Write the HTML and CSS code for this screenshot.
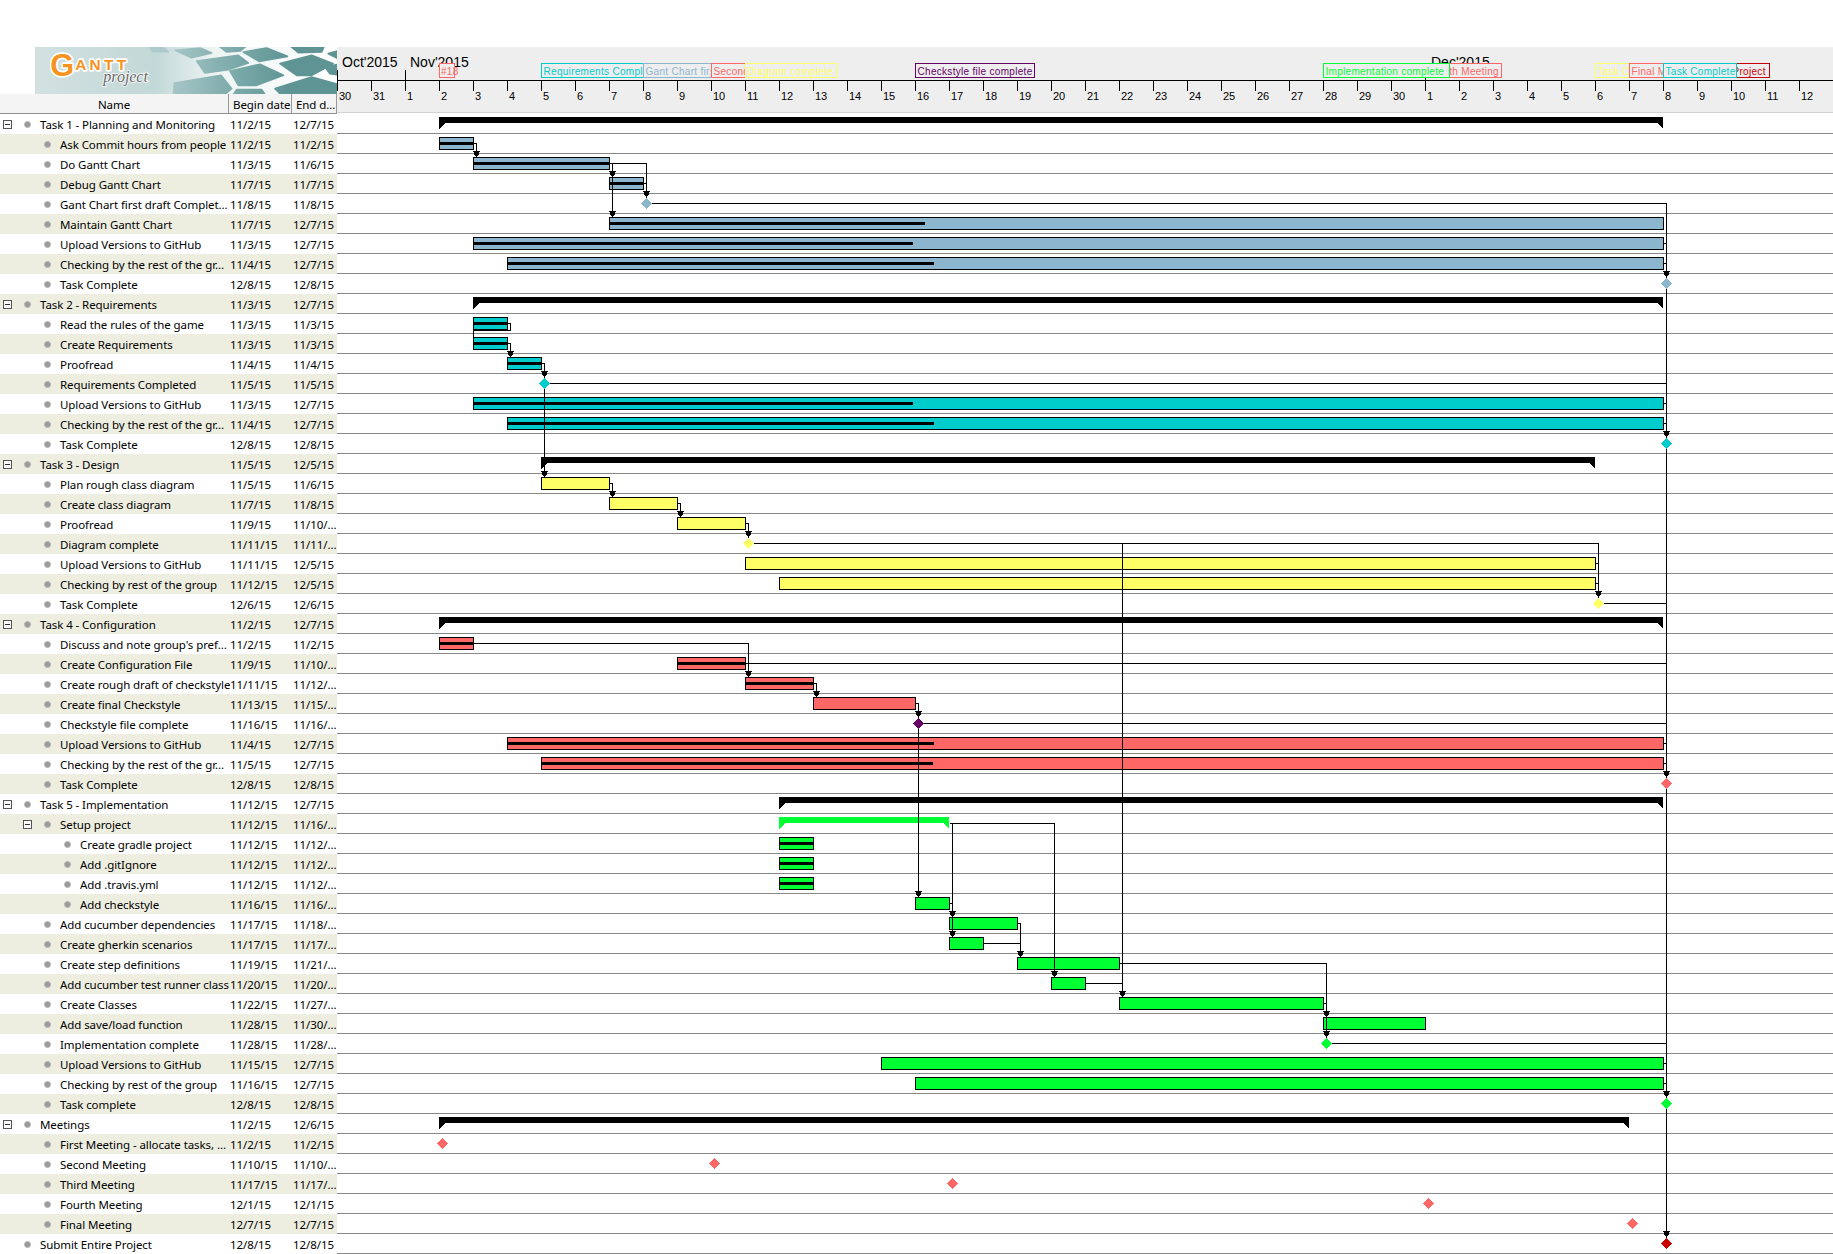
FILE: index.html
```html
<!DOCTYPE html>
<html>
<head>
	<title>GanttProject</title>
	<link rel="stylesheet" href="styles.css">
</head>
<body>
<div class="page">

  <div class="left">
    <svg class="logo" viewBox="0 0 906 141" width="302" height="47">
      <defs>
        <linearGradient id="logobg" x1="0" x2="1" y1="0" y2="0">
          <stop offset="0" stop-color="#d2e0e0"/><stop offset="0.4" stop-color="#c3d8d8"/><stop offset="0.6" stop-color="#eef4f4"/><stop offset="1" stop-color="#fff"/>
        </linearGradient>
        <linearGradient id="hex" gradientUnits="userSpaceOnUse" x1="380" x2="760" y1="0" y2="0">
          <stop offset="0" stop-color="#aecbcb"/><stop offset="0.5" stop-color="#82aeae"/><stop offset="1" stop-color="#5f9494"/>
        </linearGradient>
      </defs>
      <rect class="logo-bg" width="906" height="141"/>
      <g class="hexes">
        <polygon points="340,-8 370,-8 400,14 352,14"/>
        <polygon points="420,10 495,3 530,18 470,32"/>
        <polygon points="545,-8 640,-8 615,12 575,15"/>
        <polygon points="625,15 695,3 757,28 672,43"/>
        <polygon points="760,-8 870,-8 860,15 790,17"/>
        <polygon points="485,42 610,25 640,48 580,68 510,78"/>
        <polygon points="585,72 675,52 745,85 665,115 610,115"/>
        <polygon points="735,50 830,25 895,50 830,85 785,85"/>
        <polygon points="880,20 920,8 920,40"/>
        <polygon points="870,60 920,50 920,85 885,80"/>
        <polygon points="418,108 558,85 590,125 560,150 415,150"/>
        <polygon points="605,128 680,128 695,150 590,150"/>
        <polygon points="720,125 830,90 920,115 920,150 745,150"/>
      </g>
      <text class="logo-gantt" x="46" y="87"><tspan class="logo-g">G</tspan><tspan dx="3" dy="-17">ANTT</tspan></text>
      <text class="logo-project" x="205" y="104">project</text>
    </svg>

    <div class="thead">
      <div class="th th-name">Name</div>
      <div class="th">Begin date</div>
      <div class="th">End d...</div>
    </div>

    <div class="rows">
      <div class="row l0"><span class="name"><i class="tog"></i><i class="dot"></i>Task 1 - Planning and Monitoring</span><span>11/2/15</span><span>12/7/15</span></div>
      <div class="row l1"><span class="name"><i class="dot"></i>Ask Commit hours from people</span><span>11/2/15</span><span>11/2/15</span></div>
      <div class="row l1"><span class="name"><i class="dot"></i>Do Gantt Chart</span><span>11/3/15</span><span>11/6/15</span></div>
      <div class="row l1"><span class="name"><i class="dot"></i>Debug Gantt Chart</span><span>11/7/15</span><span>11/7/15</span></div>
      <div class="row l1"><span class="name"><i class="dot"></i>Gant Chart first draft Complet...</span><span>11/8/15</span><span>11/8/15</span></div>
      <div class="row l1"><span class="name"><i class="dot"></i>Maintain Gantt Chart</span><span>11/7/15</span><span>12/7/15</span></div>
      <div class="row l1"><span class="name"><i class="dot"></i>Upload Versions to GitHub</span><span>11/3/15</span><span>12/7/15</span></div>
      <div class="row l1"><span class="name"><i class="dot"></i>Checking by the rest of the gr...</span><span>11/4/15</span><span>12/7/15</span></div>
      <div class="row l1"><span class="name"><i class="dot"></i>Task Complete</span><span>12/8/15</span><span>12/8/15</span></div>

      <div class="row l0"><span class="name"><i class="tog"></i><i class="dot"></i>Task 2 - Requirements</span><span>11/3/15</span><span>12/7/15</span></div>
      <div class="row l1"><span class="name"><i class="dot"></i>Read the rules of the game</span><span>11/3/15</span><span>11/3/15</span></div>
      <div class="row l1"><span class="name"><i class="dot"></i>Create Requirements</span><span>11/3/15</span><span>11/3/15</span></div>
      <div class="row l1"><span class="name"><i class="dot"></i>Proofread</span><span>11/4/15</span><span>11/4/15</span></div>
      <div class="row l1"><span class="name"><i class="dot"></i>Requirements Completed</span><span>11/5/15</span><span>11/5/15</span></div>
      <div class="row l1"><span class="name"><i class="dot"></i>Upload Versions to GitHub</span><span>11/3/15</span><span>12/7/15</span></div>
      <div class="row l1"><span class="name"><i class="dot"></i>Checking by the rest of the gr...</span><span>11/4/15</span><span>12/7/15</span></div>
      <div class="row l1"><span class="name"><i class="dot"></i>Task Complete</span><span>12/8/15</span><span>12/8/15</span></div>

      <div class="row l0"><span class="name"><i class="tog"></i><i class="dot"></i>Task 3 - Design</span><span>11/5/15</span><span>12/5/15</span></div>
      <div class="row l1"><span class="name"><i class="dot"></i>Plan rough class diagram</span><span>11/5/15</span><span>11/6/15</span></div>
      <div class="row l1"><span class="name"><i class="dot"></i>Create class diagram</span><span>11/7/15</span><span>11/8/15</span></div>
      <div class="row l1"><span class="name"><i class="dot"></i>Proofread</span><span>11/9/15</span><span>11/10/...</span></div>
      <div class="row l1"><span class="name"><i class="dot"></i>Diagram complete</span><span>11/11/15</span><span>11/11/...</span></div>
      <div class="row l1"><span class="name"><i class="dot"></i>Upload Versions to GitHub</span><span>11/11/15</span><span>12/5/15</span></div>
      <div class="row l1"><span class="name"><i class="dot"></i>Checking by rest of the group</span><span>11/12/15</span><span>12/5/15</span></div>
      <div class="row l1"><span class="name"><i class="dot"></i>Task Complete</span><span>12/6/15</span><span>12/6/15</span></div>

      <div class="row l0"><span class="name"><i class="tog"></i><i class="dot"></i>Task 4 - Configuration</span><span>11/2/15</span><span>12/7/15</span></div>
      <div class="row l1"><span class="name"><i class="dot"></i>Discuss and note group's pref...</span><span>11/2/15</span><span>11/2/15</span></div>
      <div class="row l1"><span class="name"><i class="dot"></i>Create Configuration File</span><span>11/9/15</span><span>11/10/...</span></div>
      <div class="row l1"><span class="name"><i class="dot"></i>Create rough draft of checkstyle</span><span>11/11/15</span><span>11/12/...</span></div>
      <div class="row l1"><span class="name"><i class="dot"></i>Create final Checkstyle</span><span>11/13/15</span><span>11/15/...</span></div>
      <div class="row l1"><span class="name"><i class="dot"></i>Checkstyle file complete</span><span>11/16/15</span><span>11/16/...</span></div>
      <div class="row l1"><span class="name"><i class="dot"></i>Upload Versions to GitHub</span><span>11/4/15</span><span>12/7/15</span></div>
      <div class="row l1"><span class="name"><i class="dot"></i>Checking by the rest of the gr...</span><span>11/5/15</span><span>12/7/15</span></div>
      <div class="row l1"><span class="name"><i class="dot"></i>Task Complete</span><span>12/8/15</span><span>12/8/15</span></div>

      <div class="row l0"><span class="name"><i class="tog"></i><i class="dot"></i>Task 5 - Implementation</span><span>11/12/15</span><span>12/7/15</span></div>
      <div class="row l1"><span class="name"><i class="tog"></i><i class="dot"></i>Setup project</span><span>11/12/15</span><span>11/16/...</span></div>
      <div class="row l2"><span class="name"><i class="dot"></i>Create gradle project</span><span>11/12/15</span><span>11/12/...</span></div>
      <div class="row l2"><span class="name"><i class="dot"></i>Add .gitIgnore</span><span>11/12/15</span><span>11/12/...</span></div>
      <div class="row l2"><span class="name"><i class="dot"></i>Add .travis.yml</span><span>11/12/15</span><span>11/12/...</span></div>
      <div class="row l2"><span class="name"><i class="dot"></i>Add checkstyle</span><span>11/16/15</span><span>11/16/...</span></div>
      <div class="row l1"><span class="name"><i class="dot"></i>Add cucumber dependencies</span><span>11/17/15</span><span>11/18/...</span></div>
      <div class="row l1"><span class="name"><i class="dot"></i>Create gherkin scenarios</span><span>11/17/15</span><span>11/17/...</span></div>
      <div class="row l1"><span class="name"><i class="dot"></i>Create step definitions</span><span>11/19/15</span><span>11/21/...</span></div>
      <div class="row l1"><span class="name"><i class="dot"></i>Add cucumber test runner class</span><span>11/20/15</span><span>11/20/...</span></div>
      <div class="row l1"><span class="name"><i class="dot"></i>Create Classes</span><span>11/22/15</span><span>11/27/...</span></div>
      <div class="row l1"><span class="name"><i class="dot"></i>Add save/load function</span><span>11/28/15</span><span>11/30/...</span></div>
      <div class="row l1"><span class="name"><i class="dot"></i>Implementation complete</span><span>11/28/15</span><span>11/28/...</span></div>
      <div class="row l1"><span class="name"><i class="dot"></i>Upload Versions to GitHub</span><span>11/15/15</span><span>12/7/15</span></div>
      <div class="row l1"><span class="name"><i class="dot"></i>Checking by rest of the group</span><span>11/16/15</span><span>12/7/15</span></div>
      <div class="row l1"><span class="name"><i class="dot"></i>Task complete</span><span>12/8/15</span><span>12/8/15</span></div>

      <div class="row l0"><span class="name"><i class="tog"></i><i class="dot"></i>Meetings</span><span>11/2/15</span><span>12/6/15</span></div>
      <div class="row l1"><span class="name"><i class="dot"></i>First Meeting - allocate tasks, ...</span><span>11/2/15</span><span>11/2/15</span></div>
      <div class="row l1"><span class="name"><i class="dot"></i>Second Meeting</span><span>11/10/15</span><span>11/10/...</span></div>
      <div class="row l1"><span class="name"><i class="dot"></i>Third Meeting</span><span>11/17/15</span><span>11/17/...</span></div>
      <div class="row l1"><span class="name"><i class="dot"></i>Fourth Meeting</span><span>12/1/15</span><span>12/1/15</span></div>
      <div class="row l1"><span class="name"><i class="dot"></i>Final Meeting</span><span>12/7/15</span><span>12/7/15</span></div>
      <div class="row l0"><span class="name"><i class="dot"></i>Submit Entire Project</span><span>12/8/15</span><span>12/8/15</span></div>
    </div>
  </div>

  <!-- viewBox uses page coordinates, one day = 34px, Oct 30 starts at x=337 -->
  <svg class="chart" viewBox="337 47 1496 1207" width="1496" height="1207">
    <defs>
      <pattern id="grid" x="337" y="114" width="1496" height="20" patternUnits="userSpaceOnUse"><rect y="19" width="1496" height="1" class="gridline"/></pattern>
      <pattern id="ticks" x="337" y="81" width="34" height="10" patternUnits="userSpaceOnUse"><rect width="1" height="10"/></pattern>
      <path id="arw" d="M-3.5 0H3.5L1.5 5H-1.5Z"/>
      <polygon id="ms" points="0,-5.5 5.5,0 0,5.5 -5.5,0"/>
    </defs>

    <!-- timeline head -->
    <rect class="head" x="337" y="47" width="1496" height="66"/>
    <rect class="head-line" x="337" y="112" width="1496" height="1"/>
    <rect x="337" y="80" width="1496" height="1"/>
    <rect x="337" y="81" width="1496" height="10" fill="url(#ticks)"/>
    <path class="tick" d="M337.5 70V80M405.5 70V80M1425.5 70V80"/>
    <text class="month" x="342" y="67">Oct'2015</text>
    <text class="month" x="410" y="67">Nov'2015</text>
    <text class="month" x="1431" y="67">Dec'2015</text>

    <g class="day">
      <text x="339" y="100">30</text><text x="373" y="100">31</text><text x="407" y="100">1</text><text x="441" y="100">2</text><text x="475" y="100">3</text>
      <text x="509" y="100">4</text><text x="543" y="100">5</text><text x="577" y="100">6</text><text x="611" y="100">7</text><text x="645" y="100">8</text>
      <text x="679" y="100">9</text><text x="713" y="100">10</text><text x="747" y="100">11</text><text x="781" y="100">12</text><text x="815" y="100">13</text>
      <text x="849" y="100">14</text><text x="883" y="100">15</text><text x="917" y="100">16</text><text x="951" y="100">17</text><text x="985" y="100">18</text>
      <text x="1019" y="100">19</text><text x="1053" y="100">20</text><text x="1087" y="100">21</text><text x="1121" y="100">22</text><text x="1155" y="100">23</text>
      <text x="1189" y="100">24</text><text x="1223" y="100">25</text><text x="1257" y="100">26</text><text x="1291" y="100">27</text><text x="1325" y="100">28</text>
      <text x="1359" y="100">29</text><text x="1393" y="100">30</text><text x="1427" y="100">1</text><text x="1461" y="100">2</text><text x="1495" y="100">3</text>
      <text x="1529" y="100">4</text><text x="1563" y="100">5</text><text x="1597" y="100">6</text><text x="1631" y="100">7</text><text x="1665" y="100">8</text>
      <text x="1699" y="100">9</text><text x="1733" y="100">10</text><text x="1767" y="100">11</text><text x="1801" y="100">12</text>
    </g>

    <!-- milestone captions, later ones cover the earlier ones -->
    <svg x="439" y="63" width="20" height="15"><rect class="cap s-red" x="0.5" y="0.5" width="15" height="14"/><text class="cap-t c-red" x="2" y="12">#18</text></svg>
    <svg x="541" y="63" width="103" height="15"><rect class="cap s-teal" x="0.5" y="0.5" width="102" height="14"/><text class="cap-t c-teal" x="2.5" y="12">Requirements Completed</text></svg>
    <svg x="643" y="63" width="69" height="15"><rect class="cap s-blue" x="0.5" y="0.5" width="68" height="14"/><text class="cap-t c-blue" x="2.5" y="12">Gant Chart first draft Complete</text></svg>
    <svg x="711" y="63" width="35" height="15"><rect class="cap s-red" x="0.5" y="0.5" width="34" height="14"/><text class="cap-t c-red" x="2.5" y="12">Second Meeting</text></svg>
    <svg x="745" y="63" width="92" height="15"><rect class="cap s-yellow" x="0.5" y="0.5" width="91" height="14"/><text class="cap-t c-yellow" x="2.5" y="12">Diagram complete</text></svg>
    <svg x="915" y="63" width="120" height="15"><rect class="cap s-purple" x="0.5" y="0.5" width="119" height="14"/><text class="cap-t c-purple" x="2.5" y="12">Checkstyle file complete</text></svg>
    <svg x="1425" y="63" width="77" height="15"><rect class="cap s-red" x="0.5" y="0.5" width="76" height="14"/><text class="cap-t c-red" x="2.5" y="12">Fourth Meeting</text></svg>
    <svg x="1323" y="63" width="127" height="15"><rect class="cap s-green" x="0.5" y="0.5" width="126" height="14"/><text class="cap-t c-green" x="2.5" y="12">Implementation complete</text></svg>
    <svg x="1595" y="63" width="35" height="15"><rect class="cap s-yellow" x="0.5" y="0.5" width="34" height="14"/><text class="cap-t c-yellow" x="2.5" y="12">Task Complete</text></svg>
    <svg x="1629" y="63" width="35" height="15"><rect class="cap s-red" x="0.5" y="0.5" width="34" height="14"/><text class="cap-t c-red" x="2.5" y="12">Final Meeting</text></svg>
    <svg x="1663" y="63" width="107" height="15"><rect class="cap s-dark" x="0.5" y="0.5" width="106" height="14"/><text class="cap-t c-dark" x="2.5" y="12">Submit Entire Project</text></svg>
    <svg x="1663" y="63" width="74" height="15"><rect class="cap s-teal" x="0.5" y="0.5" width="73" height="14"/><text class="cap-t c-teal" x="2.5" y="12">Task Complete</text></svg>

    <!-- row lines -->
    <rect x="337" y="114" width="1496" height="1140" fill="url(#grid)"/>

    <!-- summary tasks -->
    <path d="M439 117H1663V129L1657 123H445L439 129Z"/>
    <path d="M473 297H1663V309L1657 303H479L473 309Z"/>
    <path d="M541 457H1595V469L1589 463H547L541 469Z"/>
    <path d="M439 617H1663V629L1657 623H445L439 629Z"/>
    <path d="M779 797H1663V809L1657 803H785L779 809Z"/>
    <path class="c-green" d="M779 817H949V829L943 823H785L779 829Z"/>
    <path d="M439 1117H1629V1129L1623 1123H445L439 1129Z"/>

    <!-- tasks -->
    <g class="bars c-blue">
      <rect x="439.5" y="137.5" width="34" height="12"/>
      <rect x="473.5" y="157.5" width="136" height="12"/>
      <rect x="609.5" y="177.5" width="34" height="12"/>
      <rect x="609.5" y="217.5" width="1054" height="12"/>
      <rect x="473.5" y="237.5" width="1190" height="12"/>
      <rect x="507.5" y="257.5" width="1156" height="12"/>
    </g>
    <g class="bars c-teal">
      <rect x="473.5" y="317.5" width="34" height="12"/>
      <rect x="473.5" y="337.5" width="34" height="12"/>
      <rect x="507.5" y="357.5" width="34" height="12"/>
      <rect x="473.5" y="397.5" width="1190" height="12"/>
      <rect x="507.5" y="417.5" width="1156" height="12"/>
    </g>
    <g class="bars c-yellow">
      <rect x="541.5" y="477.5" width="68" height="12"/>
      <rect x="609.5" y="497.5" width="68" height="12"/>
      <rect x="677.5" y="517.5" width="68" height="12"/>
      <rect x="745.5" y="557.5" width="850" height="12"/>
      <rect x="779.5" y="577.5" width="816" height="12"/>
    </g>
    <g class="bars c-red">
      <rect x="439.5" y="637.5" width="34" height="12"/>
      <rect x="677.5" y="657.5" width="68" height="12"/>
      <rect x="745.5" y="677.5" width="68" height="12"/>
      <rect x="813.5" y="697.5" width="102" height="12"/>
      <rect x="507.5" y="737.5" width="1156" height="12"/>
      <rect x="541.5" y="757.5" width="1122" height="12"/>
    </g>
    <g class="bars c-green">
      <rect x="779.5" y="837.5" width="34" height="12"/>
      <rect x="779.5" y="857.5" width="34" height="12"/>
      <rect x="779.5" y="877.5" width="34" height="12"/>
      <rect x="915.5" y="897.5" width="34" height="12"/>
      <rect x="949.5" y="917.5" width="68" height="12"/>
      <rect x="949.5" y="937.5" width="34" height="12"/>
      <rect x="1017.5" y="957.5" width="102" height="12"/>
      <rect x="1051.5" y="977.5" width="34" height="12"/>
      <rect x="1119.5" y="997.5" width="204" height="12"/>
      <rect x="1323.5" y="1017.5" width="102" height="12"/>
      <rect x="881.5" y="1057.5" width="782" height="12"/>
      <rect x="915.5" y="1077.5" width="748" height="12"/>
    </g>

    <!-- progress stripes -->
    <g>
      <rect x="439" y="142" width="35" height="3"/><rect x="473" y="162" width="137" height="3"/><rect x="609" y="182" width="35" height="3"/>
      <rect x="609" y="222" width="316" height="3"/><rect x="473" y="242" width="440" height="3"/><rect x="507" y="262" width="427" height="3"/>
      <rect x="473" y="322" width="35" height="3"/><rect x="473" y="342" width="35" height="3"/><rect x="507" y="362" width="35" height="3"/>
      <rect x="473" y="402" width="440" height="3"/><rect x="507" y="422" width="427" height="3"/>
      <rect x="439" y="642" width="35" height="3"/><rect x="677" y="662" width="69" height="3"/><rect x="745" y="682" width="69" height="3"/>
      <rect x="507" y="742" width="427" height="3"/><rect x="541" y="762" width="392" height="3"/>
      <rect x="779" y="842" width="35" height="3"/><rect x="779" y="862" width="35" height="3"/><rect x="779" y="882" width="35" height="3"/>
    </g>

    <!-- dependencies -->
    <g class="deps">
      <path d="M473.5 143.5H476.5V157"/>
      <path d="M609.5 163.5H612.5V217M612.5 163.5H646.5V199M643.5 183.5H646.5"/>
      <path d="M651 203.5H1666.5V1244"/>
      <path d="M1663.5 243.5H1666.5M1663.5 263.5H1666.5"/>
      <path d="M507.5 323.5H510.5V330.5H473.5V337"/>
      <path d="M507.5 343.5H510.5V357M541.5 363.5H544.5V477"/>
      <path d="M549 383.5H1666.5M1663.5 403.5H1666.5M1663.5 423.5H1666.5"/>
      <path d="M609.5 483.5H612.5V497M677.5 503.5H680.5V517M745.5 523.5H748.5V539"/>
      <path d="M753 543.5H1598.5V599M1595.5 563.5H1598.5M1595.5 583.5H1598.5M1603 603.5H1666.5"/>
      <path d="M1122.5 543.5V997M1085.5 983.5H1122.5"/>
      <path d="M473.5 643.5H748.5V677M745.5 663.5H1666.5"/>
      <path d="M813.5 683.5H816.5V697M915.5 703.5H918.5V897"/>
      <path d="M923 723.5H1666.5M1663.5 743.5H1666.5M1663.5 763.5H1666.5"/>
      <path d="M949.5 823.5H1054.5V977M952.5 823.5V937M949.5 903.5H952.5"/>
      <path d="M1017.5 923.5H1020.5V957M983.5 943.5H1020.5"/>
      <path d="M1119.5 963.5H1326.5V1039M1323.5 1003.5H1326.5"/>
      <path d="M1331 1043.5H1666.5M1663.5 1063.5H1666.5M1663.5 1083.5H1666.5"/>
    </g>
    <g>
      <use href="#arw" x="476.5" y="151"/><use href="#arw" x="612.5" y="171"/><use href="#arw" x="646.5" y="191"/><use href="#arw" x="612.5" y="211"/>
      <use href="#arw" x="1666.5" y="271"/><use href="#arw" x="510.5" y="351"/><use href="#arw" x="544.5" y="371"/><use href="#arw" x="1666.5" y="431"/>
      <use href="#arw" x="544.5" y="471"/><use href="#arw" x="612.5" y="491"/><use href="#arw" x="680.5" y="511"/><use href="#arw" x="748.5" y="531"/>
      <use href="#arw" x="1598.5" y="591"/><use href="#arw" x="748.5" y="671"/><use href="#arw" x="816.5" y="691"/><use href="#arw" x="918.5" y="711"/>
      <use href="#arw" x="1666.5" y="771"/><use href="#arw" x="918.5" y="891"/><use href="#arw" x="952.5" y="911"/><use href="#arw" x="952.5" y="931"/>
      <use href="#arw" x="1020.5" y="951"/><use href="#arw" x="1054.5" y="971"/><use href="#arw" x="1122.5" y="991"/><use href="#arw" x="1326.5" y="1011"/>
      <use href="#arw" x="1326.5" y="1031"/><use href="#arw" x="1666.5" y="1091"/><use href="#arw" x="1666.5" y="1231"/>
    </g>

    <!-- milestones -->
    <use href="#ms" class="c-blue" x="646" y="203.5"/><use href="#ms" class="c-blue" x="1666" y="283.5"/>
    <use href="#ms" class="c-teal" x="544" y="383.5"/><use href="#ms" class="c-teal" x="1666" y="443.5"/>
    <use href="#ms" class="c-yellow" x="748" y="543.5"/><use href="#ms" class="c-yellow" x="1598" y="603.5"/>
    <use href="#ms" class="c-purple" x="918" y="723.5"/><use href="#ms" class="c-red" x="1666" y="783.5"/>
    <use href="#ms" class="c-green" x="1326" y="1043.5"/><use href="#ms" class="c-green" x="1666" y="1103.5"/>
    <use href="#ms" class="c-red" x="442" y="1143.5"/><use href="#ms" class="c-red" x="714" y="1163.5"/><use href="#ms" class="c-red" x="952" y="1183.5"/>
    <use href="#ms" class="c-red" x="1428" y="1203.5"/><use href="#ms" class="c-red" x="1632" y="1223.5"/><use href="#ms" class="c-dark" x="1666" y="1243.5"/>
  </svg>

</div>
</body>
</html>
```

FILE: styles.css
```css
html,body{
	margin: 0;
	background: #fff;
}
.page{
	display: flex;
	width: 1833px;
	height: 1254px;
	padding-top: 47px;
	box-sizing: border-box;
	overflow: hidden;
}
.left{
	width: 337px;
	flex: none;
	font-family: "Noto Sans", sans-serif;
	font-size: 11.5px;
	letter-spacing: -0.08px;
	color: #000;
}
.logo{
	display: block;
	margin-left: 35px;
}
.logo-bg{ fill: url(#logobg); }
.hexes polygon{
	fill: url(#hex);
	stroke: url(#hex);
	stroke-width: 5;
	stroke-linejoin: round;
}
.logo-gantt{
	font-family: "Liberation Sans", sans-serif;
	font-weight: bold;
	font-size: 46px;
	letter-spacing: 10px;
	fill: #f7931e;
	stroke: #fff;
	stroke-width: 10px;
	stroke-linejoin: round;
	paint-order: stroke;
}
.logo-g{ font-size: 92px; letter-spacing: 0; }
.logo-project{
	font-family: "Liberation Serif", serif;
	font-style: italic;
	font-size: 48px;
	fill: #666;
	stroke: #fff;
	stroke-width: 5px;
	stroke-linejoin: round;
	paint-order: stroke;
}

.thead{
	display: grid;
	grid-template-columns: 229px 63px 45px;
	height: 20px;
	box-sizing: border-box;
	background: #f4f4f4;
	border-bottom: 1px solid #8e8e8e;
	line-height: 21px;
}
.th{
	padding-left: 4px;
	border-right: 1px solid #999;
	white-space: nowrap;
	overflow: hidden;
}
.th-name{
	padding-left: 0;
	text-align: center;
}

.row{
	display: grid;
	grid-template-columns: 230px 63px 44px;
	grid-template-rows: 20px;
	height: 20px;
	line-height: 22px;
	white-space: nowrap;
}
.row:nth-child(even){ background: #eeeee0; }
.row span{ overflow: hidden; }
.name{
	display: flex;
	align-items: flex-start;
}
.l0 .name{ padding-left: 24px; }
.l1 .name{ padding-left: 44px; }
.l2 .name{ padding-left: 64px; }
.dot{
	width: 7px;
	height: 7px;
	margin-top: 7px;
	margin-right: 9px;
	border-radius: 50%;
	background: #9a9a9a;
	border: 1px solid #b4b4b4;
	box-sizing: border-box;
	flex: none;
}
.tog{
	width: 9px;
	height: 9px;
	margin-top: 6px;
	margin-left: -21px;
	margin-right: 12px;
	border: 1px solid #555;
	background: #fff;
	box-sizing: border-box;
	flex: none;
	display: flex;
	align-items: center;
	justify-content: center;
}
.tog::after{
	content: "";
	width: 5px;
	height: 1px;
	background: #333;
}

.chart{
	display: block;
	flex: none;
	shape-rendering: crispEdges;
}
.head{ fill: #eeeeee; }
.head-line{ fill: #d2d2d2; }
.gridline{ fill: #888; }
.tick{ stroke: #000; fill: none; }
.month{
	font-family: "Liberation Sans", sans-serif;
	font-size: 14px;
}
.day text{
	font-family: "Liberation Sans", sans-serif;
	font-size: 11px;
}
.cap{
	fill: #eeeeee;
	stroke-width: 1px;
}
.cap-t{
	font-family: "Liberation Sans", sans-serif;
	font-size: 10px;
	letter-spacing: 0.3px;
}
.bars rect{
	stroke: #000;
	stroke-width: 1px;
}
.deps path{
	fill: none;
	stroke: #000;
	stroke-width: 1px;
}

.c-blue{ fill: #8cb6ce; }
.c-teal{ fill: #00cccc; }
.c-yellow{ fill: #ffff66; }
.c-red{ fill: #ff6666; }
.c-green{ fill: #00ff33; }
.c-purple{ fill: #660066; }
.c-dark{ fill: #cc0000; }
.s-blue{ stroke: #8cb6ce; }
.s-teal{ stroke: #00cccc; }
.s-yellow{ stroke: #ffff66; }
.s-red{ stroke: #ff6666; }
.s-green{ stroke: #00ff33; }
.s-purple{ stroke: #660066; }
.s-dark{ stroke: #cc0000; }
```
